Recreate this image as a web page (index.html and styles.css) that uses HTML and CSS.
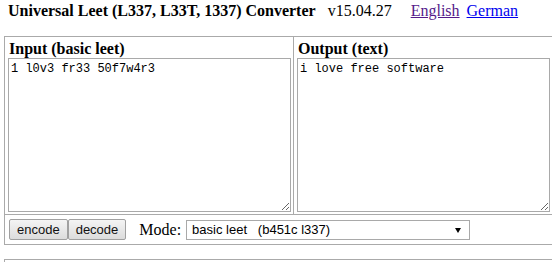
FILE: index.html
```html
<!DOCTYPE html>
<html lang="en">
<head>
  <meta charset="UTF-8">
  <title>Universal Leet Converter</title>
  <link rel="stylesheet" href="styles.css">
</head>
<body>
  <div class="title-bar">
    <span class="title">Universal Leet (L337, L33T, 1337) Converter</span>
    <span class="version">v15.04.27</span>
    <a href="#" class="lang visited">English</a>
    <a href="#" class="lang">German</a>
  </div>

  <div class="converter">
    <div class="panel panel-input">
      <h2>Input (basic leet)</h2>
      <textarea id="inputText">1 l0v3 fr33 50f7w4r3</textarea>
    </div>
    <div class="panel">
      <h2>Output (text)</h2>
      <textarea id="outputText">i love free software</textarea>
    </div>
    <div class="controls">
      <button id="encodeButton">encode</button><button id="decodeButton">decode</button>
      <label for="modeSelect" class="mode-label">Mode:</label>
      <span class="select-wrap">
        <select id="modeSelect">
          <option>basic leet&nbsp;&nbsp;&nbsp;(b451c l337)</option>
        </select>
      </span>
    </div>
  </div>

  <div class="next-box"></div>
</body>
</html>
```

FILE: styles.css
```css
body {
  margin: 0;
  padding: 2px 4px 4px 4px;
  font-family: "Liberation Serif", "Times New Roman", serif;
  color: #000;
  background-color: #fff;
  overflow: hidden;
}

.title-bar {
  padding-left: 4px;
  height: 22px;
  font-size: 16px;
  line-height: 18px;
  white-space: nowrap;
}

.title {
  font-weight: bold;
  margin-right: 8px;
}

.version {
  margin-right: 15px;
}

.lang {
  color: #0000ee;
  margin-right: 3px;
}

.lang.visited {
  color: #551a8b;
}

.converter {
  margin-top: 12px;
  width: 560px;
  border: 1px solid #aaa;
  display: grid;
  grid-template-columns: 289px 1fr;
}

.panel {
  padding: 3px 3px 2px 3px;
}

.panel-input {
  border-right: 1px solid #aaa;
}

.panel h2 {
  margin: 0 0 0 1px;
  font-size: 16px;
  line-height: 18px;
}

.panel textarea {
  display: block;
  box-sizing: border-box;
  width: 283px;
  height: 154px;
  margin: 0;
  padding: 3px 2px;
  border: 1px solid #a9a9a9;
  border-radius: 0;
  font-family: "Liberation Mono", "DejaVu Sans Mono", monospace;
  font-size: 12px;
  line-height: 15px;
  color: #000;
  outline: none;
}

.panel + .panel textarea {
  width: 253px;
}

.controls {
  grid-column: 1 / -1;
  border-top: 1px solid #aaa;
  padding: 4px;
  display: flex;
  align-items: center;
}

.controls button {
  height: 21px;
  padding: 0 7px;
  border: 1px solid #a0a0a0;
  border-radius: 2px;
  background: linear-gradient(#f4f4f4, #dcdcdc);
  font-family: "Liberation Sans", Arial, sans-serif;
  font-size: 13px;
  color: #111;
}

.mode-label {
  margin-left: 13px;
  margin-right: 5px;
  font-size: 16px;
}

.select-wrap {
  position: relative;
  display: inline-block;
}

.select-wrap select {
  -webkit-appearance: none;
  appearance: none;
  width: 284px;
  height: 20px;
  padding: 0 0 0 5px;
  border: 1px solid #a9a9a9;
  border-radius: 0;
  background-color: #fff;
  font-family: "Liberation Sans", Arial, sans-serif;
  font-size: 13px;
  color: #000;
}

.select-wrap::after {
  content: "";
  position: absolute;
  right: 9px;
  top: 8px;
  border-left: 3px solid transparent;
  border-right: 3px solid transparent;
  border-top: 5px solid #000;
  pointer-events: none;
}

.next-box {
  margin-top: 14px;
  width: 560px;
  height: 40px;
  border: 1px solid #aaa;
}
```
